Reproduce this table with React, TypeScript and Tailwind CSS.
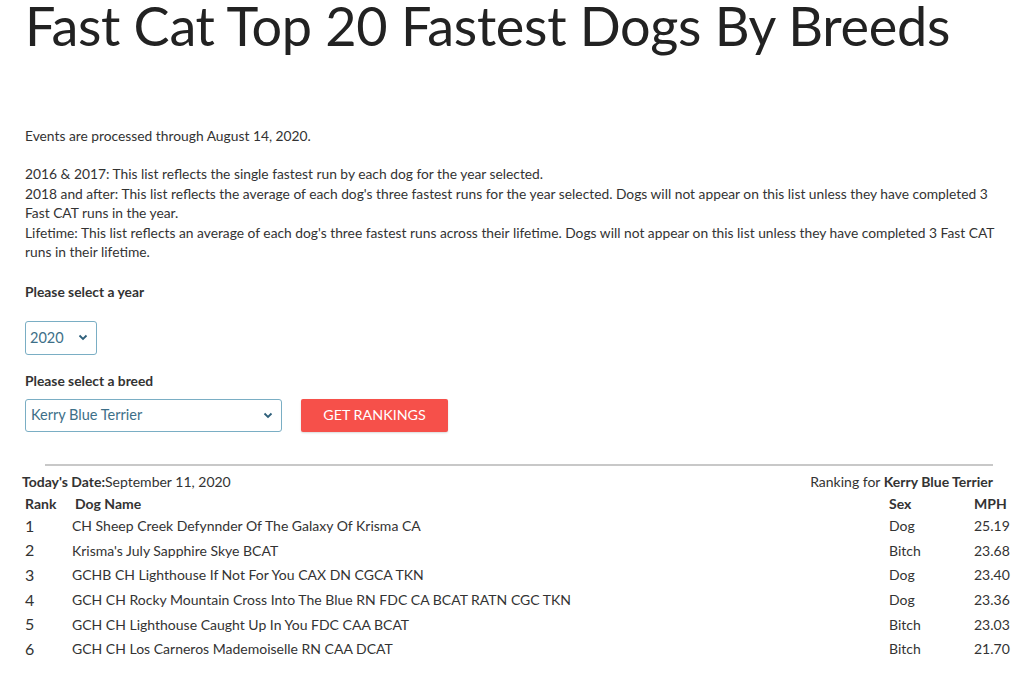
const rows = [
  { rank: 1, name: 'CH Sheep Creek Defynnder Of The Galaxy Of Krisma CA', sex: 'Dog', mph: '25.19' },
  { rank: 2, name: "Krisma's July Sapphire Skye BCAT", sex: 'Bitch', mph: '23.68' },
  { rank: 3, name: 'GCHB CH Lighthouse If Not For You CAX DN CGCA TKN', sex: 'Dog', mph: '23.40' },
  { rank: 4, name: 'GCH CH Rocky Mountain Cross Into The Blue RN FDC CA BCAT RATN CGC TKN', sex: 'Dog', mph: '23.36' },
  { rank: 5, name: 'GCH CH Lighthouse Caught Up In You FDC CAA BCAT', sex: 'Bitch', mph: '23.03' },
  { rank: 6, name: 'GCH CH Los Carneros Mademoiselle RN CAA DCAT', sex: 'Bitch', mph: '21.70' },
];

function Chevron() {
  return (
    <svg width="10" height="7" viewBox="0 0 10 7" className="shrink-0">
      <path d="M1.5 1.5 L5 5 L8.5 1.5" fill="none" stroke="#2e5f7a" strokeWidth="1.8" />
    </svg>
  );
}

export default function App() {
  return (
    <div className="w-[1024px] h-[676px] overflow-hidden bg-white font-['Lato',sans-serif] text-[#333]">
      <h1 className="pl-[25px] text-[54px] leading-[52px] tracking-[-0.3px] text-[#222] font-normal">
        Fast Cat Top 20 Fastest Dogs By Breeds
      </h1>

      <div className="pl-[25px] pr-[19px] mt-[74px] text-[13.8px] leading-[19.5px]">
        <p>Events are processed through August 14, 2020.</p>
        <p className="mt-[18.5px]">
          2016 &amp; 2017: This list reflects the single fastest run by each dog for the year selected.
          <br />
          2018 and after: This list reflects the average of each dog's three fastest runs for the year selected. Dogs will not appear on this list unless they have completed 3 Fast CAT runs in the year.
          <br />
          Lifetime: This list reflects an average of each dog's three fastest runs across their lifetime. Dogs will not appear on this list unless they have completed 3 Fast CAT runs in their lifetime.
        </p>

        <p className="mt-[20px] leading-[20px] font-bold">Please select a year</p>
        <div className="mt-[19px] w-[72px] h-[34px] border border-[#7aaec4] rounded-[3px] flex items-center justify-between pl-[4px] pr-[8px] text-[#3d6f88] text-[14.5px]">
          <span>2020</span>
          <Chevron />
        </div>

        <p className="mt-[16px] leading-[20px] font-bold">Please select a breed</p>
        <div className="mt-[8px] flex items-center gap-[19px]">
          <div className="w-[257px] h-[33px] border border-[#7aaec4] rounded-[3px] flex items-center justify-between pl-[5px] pr-[8px] text-[#3d6f88] text-[14.5px]">
            <span>Kerry Blue Terrier</span>
            <Chevron />
          </div>
          <div className="w-[147px] h-[33px] bg-[#f6504a] rounded-[2px] flex items-center justify-center text-white text-[14.3px] shadow-[0_1px_2px_rgba(0,0,0,0.15)]">
            GET RANKINGS
          </div>
        </div>
      </div>

      <div className="ml-[45px] mr-[31px] mt-[32px] border-t-2 border-[#c8c8c8]" />

      <div className="pl-[22px] text-[14px]">
        <div className="mt-[6px] pr-[31px] flex justify-between leading-[20px]">
          <span><b>Today's Date:</b>September 11, 2020</span>
          <span>Ranking for <b>Kerry Blue Terrier</b></span>
        </div>
        <div className="mt-[2px] flex leading-[20px] font-bold pl-[3px] pr-[17px]">
          <span className="w-[50px]">Rank</span>
          <span className="flex-1">Dog Name</span>
          <span className="w-[85px]">Sex</span>
          <span className="w-[33px]">MPH</span>
        </div>
        {rows.map((r) => (
          <div key={r.rank} className="flex items-center h-[24.6px] pl-[3px] pr-[17px]">
            <span className="w-[47px] text-[16px]">{r.rank}</span>
            <span className="flex-1">{r.name}</span>
            <span className="w-[85px]">{r.sex}</span>
            <span className="w-[33px]">{r.mph}</span>
          </div>
        ))}
      </div>
    </div>
  );
}
